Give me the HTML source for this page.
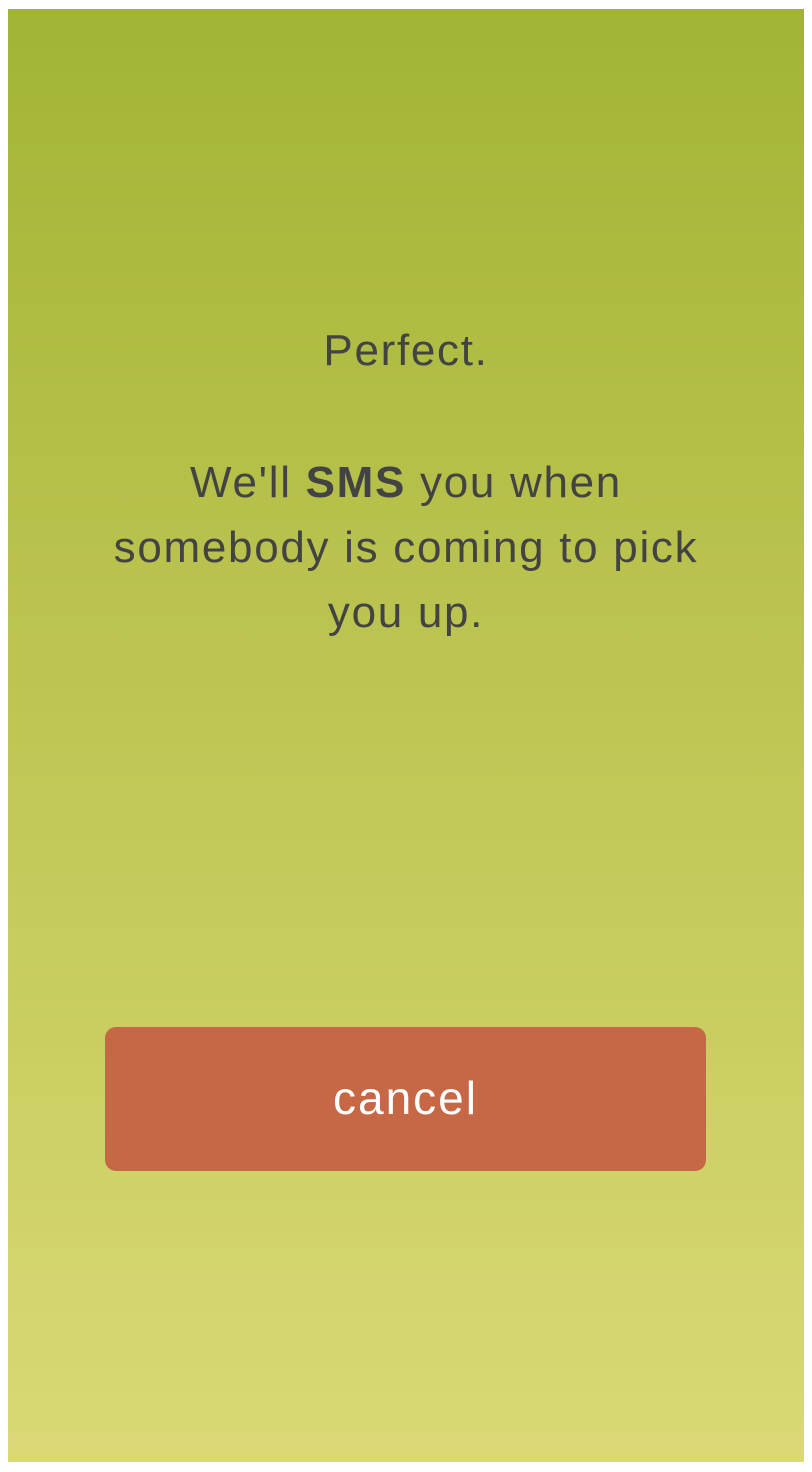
<!DOCTYPE html>
<html><head><meta charset="utf-8"><style>
html,body{margin:0;padding:0;background:#fff;width:812px;height:1472px;overflow:hidden}
.bg{position:absolute;left:8px;top:9px;width:796px;height:1453px;background:linear-gradient(#a3b434,#dad975)}
.t{position:absolute;left:0;width:812px;text-align:center;font-family:"Liberation Sans",sans-serif;font-weight:400;color:#434343;font-size:44px;line-height:65px;letter-spacing:1.7px}
.t b{font-weight:700}
.btn{position:absolute;left:105px;top:1027px;width:601px;height:144px;background:#c66845;border-radius:11px;color:#fff;font-family:"Liberation Sans",sans-serif;font-size:46px;letter-spacing:2px;text-align:center;line-height:142px}
</style></head><body>
<div class="bg"></div>
<div class="t" style="top:318px">Perfect.</div>
<div class="t" style="top:450px">We'll <b>SMS</b> you when<br>somebody is coming to pick<br>you up.</div>
<div class="btn">cancel</div>
</body></html>
